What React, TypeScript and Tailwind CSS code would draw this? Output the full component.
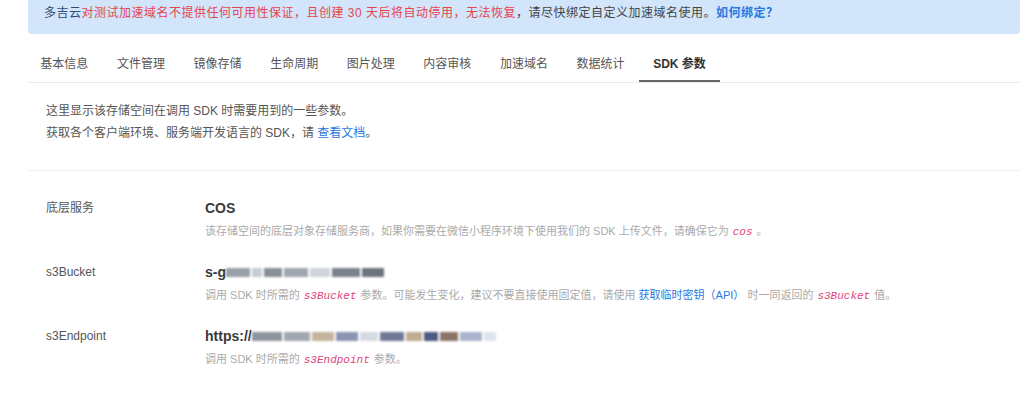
const tabs = ["基本信息", "文件管理", "镜像存储", "生命周期", "图片处理", "内容审核", "加速域名", "数据统计", "SDK 参数"];

function Code({ children }: { children: string }) {
  return (
    <span className="font-['Liberation_Mono',monospace] italic text-[#e0457b] text-[11px] mx-[4px]">{children}</span>
  );
}

function Masked({ blocks }: { blocks: [number, string][] }) {
  return (
    <span className="inline-flex items-center gap-[2px] blur-[1px] align-middle">
      {blocks.map(([w, c], i) => (
        <span key={i} className="inline-block h-[9px]" style={{ width: w, backgroundColor: c }} />
      ))}
    </span>
  );
}

function Row({ label, value, desc }: { label: string; value: React.ReactNode; desc: React.ReactNode }) {
  return (
    <div className="flex mb-[19px]">
      <div className="w-[159px] text-[12px] leading-[22px] text-[#555]">{label}</div>
      <div>
        <div className="text-[14px] leading-[22px] font-bold text-[#3a3a3a]">{value}</div>
        <div className="mt-[2px] text-[11px] leading-[20px] text-[#aaa]">{desc}</div>
      </div>
    </div>
  );
}

export default function App() {
  return (
    <div className="w-[1024px] h-[402px] overflow-hidden bg-white pl-[28px] pr-[4px] font-['Liberation_Sans','Noto_Sans_CJK_SC',sans-serif]">
      {/* 提示条 */}
      <div className="h-[34px] bg-[#d2e5fb] rounded-b-[4px] pl-[16px] pt-[5px] text-[12px] leading-[16px] tracking-[0.5px]">
        <span className="text-[#2f4d72]">多吉云</span>
        <span className="text-[#e5444d]">对测试加速域名不提供任何可用性保证，且创建 30 天后将自动停用，无法恢复</span>
        <span className="text-[#444]">，请尽快绑定自定义加速域名使用。</span>
        <span className="text-[#2a78e0] font-bold">如何绑定？</span>
      </div>

      {/* 标签栏 */}
      <div className="mt-[12px] flex border-b border-[#e8e8e8]">
        <div className="flex -ml-[2px]">
          {tabs.map((t, i) => {
            const active = i === tabs.length - 1;
            return (
              <div
                key={t}
                className={
                  active
                    ? "px-[14.3px] h-[36px] leading-[36px] text-[12px] font-bold text-[#333] border-b-2 border-[#666] -mb-px"
                    : "px-[14.3px] h-[36px] leading-[36px] text-[12px] text-[#555]"
                }
              >
                {t}
              </div>
            );
          })}
        </div>
      </div>

      {/* 说明 */}
      <div className="pl-[18px] pt-[17px] pb-[26px] text-[12px] leading-[22px] text-[#555] border-b border-[#f0f0f0]">
        <p>这里显示该存储空间在调用 SDK 时需要用到的一些参数。</p>
        <p>
          获取各个客户端环境、服务端开发语言的 SDK，请 <span className="text-[#2a78e0]">查看文档</span>。
        </p>
      </div>

      {/* 参数 */}
      <div className="pl-[18px] pt-[26px]">
        <Row
          label="底层服务"
          value="COS"
          desc={
            <>
              该存储空间的底层对象存储服务商，如果你需要在微信小程序环境下使用我们的 SDK 上传文件，请确保它为<Code>cos</Code>。
            </>
          }
        />
        <Row
          label="s3Bucket"
          value={
            <span className="inline-flex items-center">
              s-g
              <Masked
                blocks={[
                  [24, "#9aa0a8"],
                  [10, "#c8ccd2"],
                  [18, "#8a9098"],
                  [24, "#a0a6ae"],
                  [20, "#d0d4da"],
                  [28, "#7c828c"],
                  [22, "#6e747c"],
                ]}
              />
            </span>
          }
          desc={
            <>
              调用 SDK 时所需的<Code>s3Bucket</Code>参数。可能发生变化，建议不要直接使用固定值，请使用{" "}
              <span className="text-[#2a78e0]">获取临时密钥（API）</span> 时一同返回的<Code>s3Bucket</Code>值。
            </>
          }
        />
        <Row
          label="s3Endpoint"
          value={
            <span className="inline-flex items-center">
              https://
              <Masked
                blocks={[
                  [30, "#8e949c"],
                  [26, "#a2a8b0"],
                  [22, "#c4b49c"],
                  [22, "#8a96b0"],
                  [18, "#d6dae2"],
                  [24, "#707a96"],
                  [16, "#c0ab90"],
                  [14, "#4f5a80"],
                  [18, "#8c7466"],
                  [22, "#aab4cc"],
                  [12, "#dfe3ea"],
                ]}
              />
            </span>
          }
          desc={
            <>
              调用 SDK 时所需的<Code>s3Endpoint</Code>参数。
            </>
          }
        />
      </div>
    </div>
  );
}
